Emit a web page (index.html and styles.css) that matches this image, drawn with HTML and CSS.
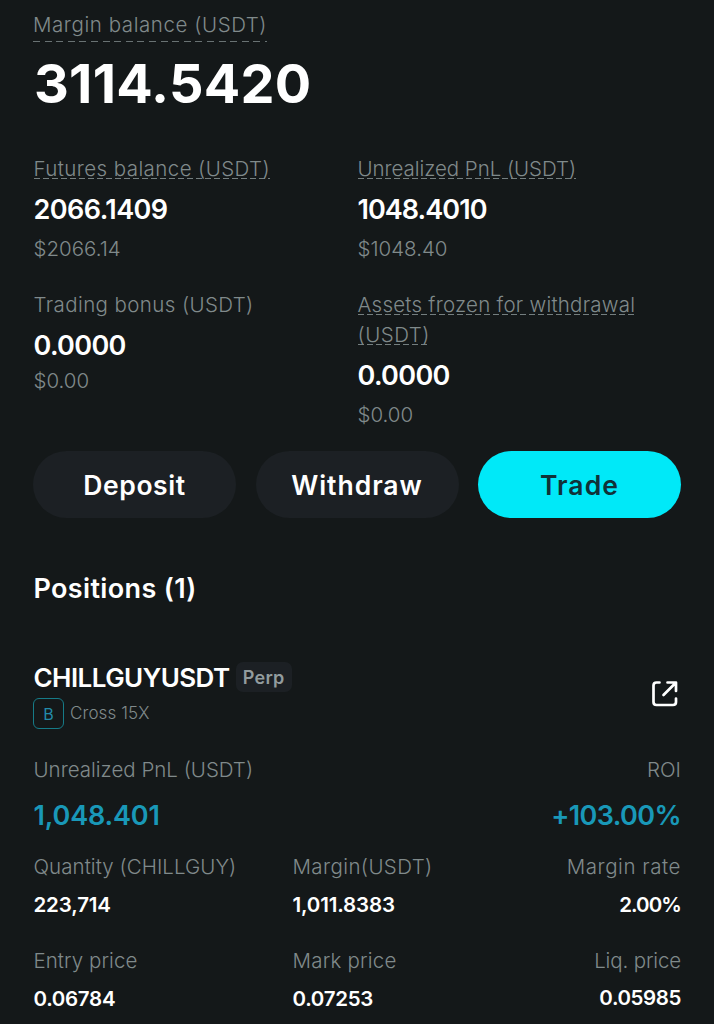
FILE: index.html
```html
<!DOCTYPE html>
<html lang="en"><head><meta charset="utf-8"><title>Futures</title><link rel="stylesheet" href="styles.css"></head>
<body>
<main class="page">
<section class="total"><div class="label"><span class="dash-wide l-margin">Margin balance (USDT)</span></div><div class="total-value">3114.5420</div></section>
<section class="balances">
<div class="balance"><div class="label"><span class="dash l-futures">Futures balance (USDT)</span></div><div class="value v-2066">2066.1409</div><div class="sub">$2066.14</div></div>
<div class="balance"><div class="label"><span class="dash l-upnl">Unrealized PnL (USDT)</span></div><div class="value v-1048">1048.4010</div><div class="sub">$1048.40</div></div>
<div class="balance compact"><div class="label"><span class="l-bonus">Trading bonus (USDT)</span></div><div class="value v-zero">0.0000</div><div class="sub">$0.00</div></div>
<div class="balance"><div class="label"><span class="dash l-frozen">Assets frozen for withdrawal</span><br><span class="dash l-usdt">(USDT)</span></div><div class="value v-zero">0.0000</div><div class="sub">$0.00</div></div>
</section>
<nav class="actions"><button class="btn b-deposit">Deposit</button><button class="btn b-withdraw">Withdraw</button><button class="btn primary b-trade">Trade</button></nav>
<h2 class="heading">Positions (1)</h2>
<section class="position">
<header class="position-head"><div>
<div class="symbol-row"><span class="symbol">CHILLGUYUSDT</span><span class="badge">Perp</span></div>
<div class="mode-row"><span class="side">B</span><span class="mode">Cross 15X</span></div></div>
<svg class="share" viewBox="0 0 28 28" fill="none" stroke="#fff" stroke-width="2.7" stroke-linecap="round" stroke-linejoin="round"><path d="M8.500 2.500H5.500Q2.500 2.500 2.500 5.500V22Q2.500 25 5.500 25H22Q25 25 25 22V18.500M16.500 2.500H25V11M24.500 3L12.500 15"/></svg>
</header>
<div class="pnl"><div><div class="label"><span>Unrealized PnL (USDT)</span></div><div class="gain g-pnl">1,048.401</div></div><div class="end"><div class="label"><span>ROI</span></div><div class="gain g-roi">+103.00%</div></div></div>
<div class="stats">
<div><div class="label"><span class="l-qty">Quantity (CHILLGUY)</span></div><div class="stat n-qty">223,714</div></div>
<div><div class="label"><span class="l-mgn">Margin(USDT)</span></div><div class="stat n-qty">1,011.8383</div></div>
<div class="end"><div class="label"><span class="l-rate">Margin rate</span></div><div class="stat n-rate">2.00%</div></div>
<div><div class="label"><span class="l-entry">Entry price</span></div><div class="stat n-price">0.06784</div></div>
<div><div class="label"><span class="l-mark">Mark price</span></div><div class="stat n-price">0.07253</div></div>
<div class="end liq"><div class="label"><span class="l-liq">Liq. price</span></div><div class="stat n-liq">0.05985</div></div>
</div>
</section>
</main>
</body></html>
```
FILE: styles.css
```css
*{box-sizing:border-box}
body{margin:0;background:#141819;color:#fff;font-family:Inter,"Liberation Sans",sans-serif;white-space:nowrap}
.page{width:714px;height:1024px;padding:9.500px 33px 0;overflow:hidden}
.label{font-size:20.5px;line-height:30px;font-weight:300;color:#808a8b}
.label span{display:inline-block}
.total{height:144.5px}
.dash-wide{height:32px;background:repeating-linear-gradient(90deg,#697273 0 7px,transparent 7px 11.6px) 0 100%/100% 1px no-repeat}
.total-value{font-size:54px;line-height:60px;font-weight:700;margin-top:10px;padding-left:1px;letter-spacing:.25px}
.dash{height:30px;background:repeating-linear-gradient(90deg,#747e7f 0 6px,transparent 6px 9px) 0 24px/100% 1px no-repeat}
.total .label{height:34px}
.balances{display:grid;grid-template-columns:324px 324px;grid-template-rows:136px 161px}
.balance{padding-left:.5px}
.balance .label{margin-bottom:7px}
.value{font-size:27px;line-height:38px;font-weight:600}
.sub{font-size:20.5px;line-height:30px;margin-top:5px;font-weight:300;color:#808a8b}
.compact .sub{margin-top:1px}
.actions{display:grid;grid-template-columns:repeat(3,203px);gap:19.5px}
.btn{height:67px;border:0;border-radius:34px;padding:0;background:#1c2024;color:#fff;font:600 26.5px/66px Inter,sans-serif}
.primary{background:#00e9f8;color:#103238}
.heading{margin:51px 0 0;padding-left:.5px;font-size:27px;line-height:40px;font-weight:600;letter-spacing:.35px}
.position-head{display:flex;justify-content:space-between;margin-top:53px}
.symbol-row,.mode-row{display:flex;align-items:center}
.symbol-row{height:30px}
.symbol{font-size:26px;line-height:30px;font-weight:600;letter-spacing:-.55px;padding:2px 0 0 .5px}
.badge{width:56px;height:30px;margin-left:6px;border-radius:7px;background:#1c2024;color:#929c9e;font-size:18px;line-height:31px;font-weight:600;text-align:center;letter-spacing:.3px}
.mode-row{height:31px;margin-top:6px}
.side{width:31px;height:31px;border:1px solid #167b87;border-radius:6px;color:#238caa;font-size:16px;line-height:30px;text-align:center}
.mode{margin-left:6px;color:#808a8b;font-size:17px;line-height:20px;font-weight:300;letter-spacing:.1px;padding-bottom:1px}
.share{width:28px;height:28px;margin:18px 2.5px 0 0}
.pnl{display:flex;justify-content:space-between;margin-top:26px}
.pnl>div:first-child{padding-left:.5px}
.end{text-align:right}
.gain{font-size:27px;line-height:40px;font-weight:600;color:#1998b8;margin-top:10.5px}
.stats{display:grid;grid-template-columns:259px 180px 209px;grid-template-rows:94.5px 80px;margin-top:16px}
.stats>div:not(.end){padding-left:.5px}
.stat{font-size:20.5px;line-height:30px;font-weight:600;margin-top:8px}
.liq .stat{margin-top:6.5px}

/* Tracking per text */
.l-margin{letter-spacing:.57px}
.l-futures{letter-spacing:.42px}
.l-upnl{letter-spacing:-.05px}
.l-bonus{letter-spacing:.4px}
.l-frozen{letter-spacing:.25px}
.l-usdt{letter-spacing:.5px}
.v-2066{letter-spacing:-.55px}
.v-1048{letter-spacing:-.95px}
.v-zero{letter-spacing:-.65px}
.b-deposit{letter-spacing:.6px}
.b-withdraw{letter-spacing:.95px}
.b-trade{letter-spacing:1.1px}
.g-pnl{letter-spacing:-.15px}
.g-roi{letter-spacing:-.6px}
.l-qty{letter-spacing:.05px}
.l-mgn{letter-spacing:.4px}
.l-rate{letter-spacing:.55px}
.l-entry{letter-spacing:.05px}
.l-mark{letter-spacing:.22px}
.l-liq{letter-spacing:-.15px}
.n-qty{letter-spacing:-.15px}
.n-rate{letter-spacing:-.9px}
.n-price{letter-spacing:-.3px}
.n-liq{letter-spacing:-.4px}
```
